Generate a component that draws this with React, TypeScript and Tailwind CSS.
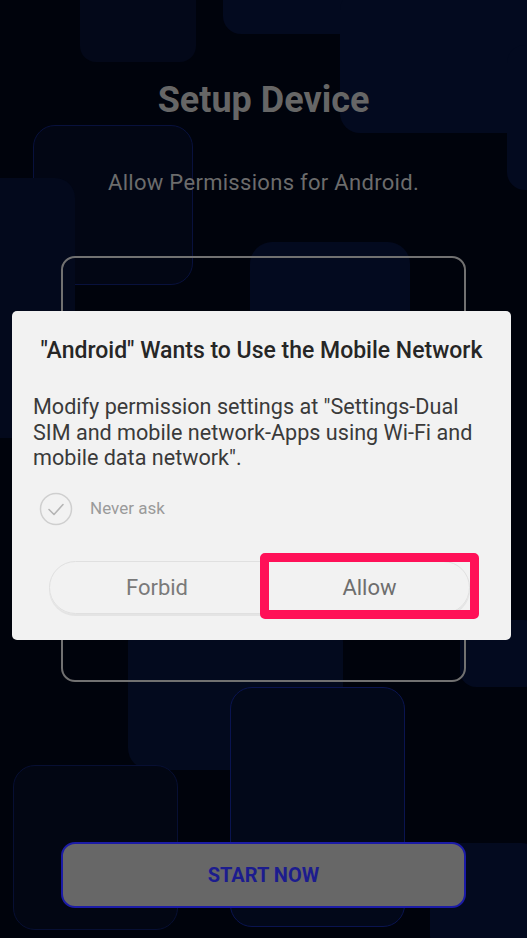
import React from 'react'

// faint rounded tiles behind everything
const tiles = [
  'left-[80px] top-[-20px] w-[116px] h-[82px] rounded-[16px] bg-[#030819]',
  'left-[223px] top-[-20px] w-[330px] h-[54px] rounded-[18px] bg-[#030a1f]',
  'left-[340px] top-[-10px] w-[200px] h-[143px] rounded-[20px] bg-[#030a1f]',
  'left-[507px] top-[45px] w-[60px] h-[145px] rounded-[18px] bg-[#030a1f]',
  'left-[33px] top-[125px] w-[160px] h-[160px] rounded-[22px] border border-[#08113d] bg-[#020614]',
  'left-[-20px] top-[178px] w-[95px] h-[260px] rounded-[20px] bg-[#03091c]',
  'left-[250px] top-[242px] w-[160px] h-[150px] rounded-[22px] bg-[#030a1f]',
  'left-[128px] top-[620px] w-[215px] h-[150px] rounded-[22px] bg-[#030a1e]',
  'left-[230px] top-[687px] w-[175px] h-[240px] rounded-[22px] border border-[#0a1450] bg-[#020819]',
  'left-[460px] top-[620px] w-[80px] h-[67px] rounded-[16px] bg-[#030a1f]',
  'left-[13px] top-[765px] w-[165px] h-[165px] rounded-[22px] border border-[#070f33] bg-[#020613]',
  'left-[430px] top-[843px] w-[110px] h-[110px] rounded-[18px] bg-[#030a1f]',
]

const CheckCircle = () => (
  <svg width="34" height="34" viewBox="0 0 34 34" fill="none">
    <circle cx="17" cy="17" r="15.5" stroke="#cfcfcf" strokeWidth="1.5" />
    <path d="M10 17.5l5 5 9-10" stroke="#b5b5b5" strokeWidth="1.6" strokeLinecap="round" strokeLinejoin="round" />
  </svg>
)

const App = () => {
  return (
    <div
      className="relative w-[527px] h-[938px] overflow-hidden bg-[#00030c]"
      style={{ fontFamily: 'Roboto, "Noto Sans", sans-serif' }}
    >
      {tiles.map((t, i) => (
        <div key={i} className={'absolute ' + t} />
      ))}

      <div className="relative flex flex-col items-center">
        <h1 className="mt-[78px] text-[36px] leading-[44px] font-bold text-[#666666]">Setup Device</h1>
        <p className="mt-[48px] text-[22px] leading-[26px] text-[#6c6c6c] tracking-[0.3px]">Allow Permissions for Android.</p>
        <div className="mt-[60px] w-[405px] h-[426px] rounded-[14px] border-2 border-[#717171]" />
        <button className="mt-[160px] w-[405px] h-[66px] rounded-[14px] border-2 border-[#1b1ba6] bg-[#676767] text-[20px] font-bold text-[#1c1c8e]">
          START NOW
        </button>
      </div>

      {/* permission dialog */}
      <div className="absolute left-[12px] top-[311px] w-[499px] h-[329px] rounded-[5px] bg-[#f2f2f2] px-[21px] pt-[24px]">
        <h2 className="text-center text-[23px] leading-[32px] font-medium text-[#262626] whitespace-nowrap">
          "Android" Wants to Use the Mobile Network
        </h2>
        <p className="mt-[27px] text-[21.6px] leading-[25.5px] text-[#3a3a3a] whitespace-nowrap">
          Modify permission settings at "Settings-Dual
          <br />
          SIM and mobile network-Apps using Wi-Fi and
          <br />
          mobile data network".
        </p>
        <div className="mt-[21px] flex items-center gap-[17px] pl-[6px]">
          <CheckCircle />
          <span className="text-[17px] text-[#9a9a9a]">Never ask</span>
        </div>
        <div className="relative mt-[35px] ml-[16px] w-[421px] h-[53px] flex rounded-full border border-[#e0e0e0] shadow-[0_2px_0_#e4e4e4]">
          <div className="w-[214px] flex items-center justify-center text-[22px] text-[#7a7a7a]">Forbid</div>
          <div className="flex-1 flex items-center justify-center pl-[6px] text-[22px] text-[#6e6e6e]">Allow</div>
          <div className="absolute left-[210px] top-[-9px] w-[219px] h-[66px] rounded-[5px] border-[9px] border-[#ff1158]" />
        </div>
      </div>
    </div>
  )
}

export default App
